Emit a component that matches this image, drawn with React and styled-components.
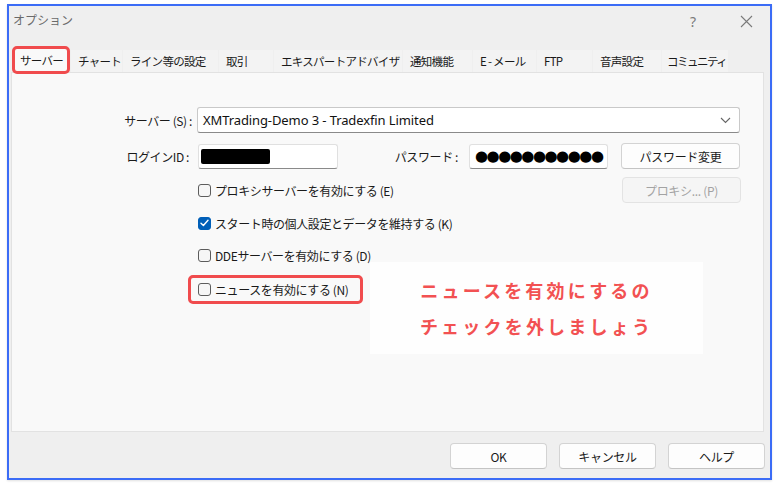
import React from "react";
import styled, { createGlobalStyle } from "styled-components";

const Global = createGlobalStyle`
  html, body { margin: 0; padding: 0; background: #ffffff; }
  body { font-family: "Noto Sans", "Noto Sans CJK JP", sans-serif; }
  * { box-sizing: border-box; }
`;

const Page = styled.div`
  width: 780px;
  height: 487px;
  padding: 4px 0 0 7px;
  background: #ffffff;
`;

const Frame = styled.div`
  width: 765px;
  height: 476px;
  border: 2px solid #3b6cf6;
  background: #efefef;
  display: flex;
  flex-direction: column;
  box-shadow: 0 1px 2px rgba(0, 0, 0, 0.12);
`;

const TitleBar = styled.div`
  height: 40px;
  display: flex;
  align-items: flex-start;
  padding: 6px 0 0 4px;
  font-family: "Noto Sans CJK JP", sans-serif;
  font-size: 12px;
  color: #6a6a6a;
`;

const TitleText = styled.div`
  flex: 1;
  line-height: 16px;
`;

const TitleButton = styled.div`
  width: 28px;
  height: 18px;
  display: flex;
  align-items: center;
  justify-content: center;
  color: #7a7a7a;
  font-family: "Noto Sans", sans-serif;
  font-size: 14px;
  margin-right: ${(p) => p.$mr || 0}px;
`;

const TabRow = styled.div`
  height: 26px;
  display: flex;
  align-items: flex-end;
  padding-left: 3px;
  position: relative;
  z-index: 2;
`;

const Tab = styled.div`
  width: ${(p) => p.$w}px;
  height: ${(p) => (p.$active ? 28 : 22)}px;
  margin-bottom: ${(p) => (p.$active ? -2 : 0)}px;
  margin-right: 1px;
  padding-left: ${(p) => (p.$active ? 5 : p.$pl || 7)}px;
  display: flex;
  align-items: center;
  background: ${(p) => (p.$active ? "#f9f9f9" : "#f3f3f3")};
  border: ${(p) => (p.$active ? "3px solid #f04b4d" : "none")};
  border-radius: ${(p) => (p.$active ? 5 : 0)}px;
  font-family: "Noto Sans CJK JP", sans-serif;
  font-size: 11.5px;
  letter-spacing: ${(p) => p.$ls || -0.7}px;
  color: #1a1a1a;
  white-space: nowrap;
  overflow: hidden;
`;

const Panel = styled.div`
  position: relative;
  margin: 0 6px 0 2px;
  height: 360px;
  border: 1px solid #e2e2e2;
  background: #f9f9f9;
  padding-top: 34px;
  display: flex;
  flex-direction: column;
  font-family: "Noto Sans CJK JP", sans-serif;
  font-size: 12px;
  letter-spacing: -0.4px;
  color: #1a1a1a;
`;

const Row = styled.div`
  display: flex;
  align-items: center;
  height: ${(p) => p.$h || 26}px;
  margin-top: ${(p) => p.$mt || 0}px;
`;

const Label = styled.div`
  width: ${(p) => p.$w}px;
  margin-right: ${(p) => p.$mr || 0}px;
  text-align: right;
  white-space: nowrap;
`;

const Select = styled.div`
  width: 543px;
  height: 26px;
  background: #ffffff;
  border: 1px solid #c9c9c9;
  border-bottom-color: #8a8a8a;
  border-radius: 3px;
  display: flex;
  align-items: center;
  padding: 0 8px 0 5px;
  font-family: "Noto Sans", "Noto Sans CJK JP", sans-serif;
  font-size: 13px;
  letter-spacing: -0.1px;
  color: #111;
`;

const SelectText = styled.div`
  flex: 1;
`;

const Input = styled.div`
  width: ${(p) => p.$w}px;
  height: 25px;
  margin-left: ${(p) => p.$ml || 0}px;
  background: #ffffff;
  border: 1px solid #e0e0e0;
  border-bottom-color: #8a8a8a;
  border-radius: 3px;
  display: flex;
  align-items: center;
  padding-left: 2px;
  overflow: hidden;
`;

const Redacted = styled.div`
  width: 69px;
  height: 15px;
  background: #000;
  border-radius: 2px;
`;

const Dots = styled.div`
  font-family: "DejaVu Sans", sans-serif;
  font-size: 15px;
  letter-spacing: -1.5px;
  white-space: nowrap;
  color: #000;
  padding-left: 3px;
`;

const Button = styled.div`
  width: ${(p) => p.$w || 119}px;
  height: 26px;
  margin-left: ${(p) => p.$ml || 0}px;
  margin-right: ${(p) => p.$mr || 0}px;
  background: ${(p) => (p.$disabled ? "#f5f5f5" : "#fdfdfd")};
  border: 1px solid ${(p) => (p.$disabled ? "#e3e3e3" : "#d3d3d3")};
  border-bottom-color: ${(p) => (p.$disabled ? "#e3e3e3" : "#c4c4c4")};
  border-radius: 4px;
  display: flex;
  align-items: center;
  justify-content: center;
  font-family: "Noto Sans CJK JP", sans-serif;
  font-size: 12px;
  letter-spacing: -0.3px;
  color: ${(p) => (p.$disabled ? "#a3a3a3" : "#1a1a1a")};
`;

const CheckRow = styled.div`
  display: flex;
  align-items: center;
  height: ${(p) => p.$h || 20}px;
  margin-top: ${(p) => p.$mt || 0}px;
  margin-left: ${(p) => p.$ml || 186}px;
`;

const Highlight = styled.div`
  display: flex;
  align-items: center;
  width: 175px;
  height: 29px;
  margin-left: 176px;
  margin-top: 10px;
  padding-left: 7px;
  border: 3px solid #f04b4d;
  border-radius: 5px;
`;

const Box = styled.div`
  width: 13px;
  height: 13px;
  border-radius: 3px;
  border: 1px solid ${(p) => (p.$checked ? "#005fb8" : "#5c5c5c")};
  background: ${(p) => (p.$checked ? "#005fb8" : "#f6f6f6")};
  display: flex;
  align-items: center;
  justify-content: center;
  margin-right: 4px;
  flex-shrink: 0;
`;

const CheckText = styled.span`
  white-space: nowrap;
`;

const Spacer = styled.div`
  flex: 1;
`;

const Callout = styled.div`
  position: absolute;
  left: 358px;
  top: 189px;
  width: 333px;
  height: 92px;
  background: #fefefe;
  display: flex;
  flex-direction: column;
  align-items: center;
  justify-content: center;
  font-family: "Noto Sans CJK JP", sans-serif;
  font-weight: 700;
  font-size: 18px;
  letter-spacing: 3.2px;
  line-height: 36px;
  color: #f25152;
`;

const Footer = styled.div`
  display: flex;
  justify-content: flex-end;
  gap: 12px;
  padding: 11px 5px 0 0;
`;

function Check({ checked, children }) {
  return (
    <>
      <Box $checked={checked}>
        {checked && (
          <svg width="9" height="8" viewBox="0 0 9 8">
            <path d="M1 4.2 L3.4 6.5 L8 1.3" fill="none" stroke="#fff" strokeWidth="1.4" strokeLinecap="round" strokeLinejoin="round" />
          </svg>
        )}
      </Box>
      <CheckText>{children}</CheckText>
    </>
  );
}

const tabs = [
  { t: "サーバー", w: 58, active: true },
  { t: "チャート", w: 51 },
  { t: "ライン等の設定", w: 95 },
  { t: "取引", w: 54 },
  { t: "エキスパートアドバイザ", w: 128 },
  { t: "通知機能", w: 69 },
  { t: "E - メール", w: 63 },
  { t: "FTP", w: 55 },
  { t: "音声設定", w: 68 },
  { t: "コミュニティ", w: 66, pl: 5, ls: -1.5 },
];

export default function App() {
  return (
    <>
      <Global />
      <Page>
        <Frame>
          <TitleBar>
            <TitleText>オプション</TitleText>
            <TitleButton $mr={25}>?</TitleButton>
            <TitleButton $mr={10}>
              <svg width="13" height="13" viewBox="0 0 13 13">
                <path d="M1 1 L12 12 M12 1 L1 12" stroke="#7a7a7a" strokeWidth="1.1" />
              </svg>
            </TitleButton>
          </TitleBar>
          <TabRow>
            {tabs.map((tab) => (
              <Tab key={tab.t} $w={tab.w} $active={tab.active} $pl={tab.pl} $ls={tab.ls}>
                {tab.t}
              </Tab>
            ))}
          </TabRow>
          <Panel>
            <Row>
              <Label $w={180} $mr={5}>サーバー (S) :</Label>
              <Select>
                <SelectText>XMTrading-Demo 3 - Tradexfin Limited</SelectText>
                <svg width="11" height="7" viewBox="0 0 11 7">
                  <path d="M1 1 L5.5 5.5 L10 1" fill="none" stroke="#666" strokeWidth="1.1" />
                </svg>
              </Select>
            </Row>
            <Row $mt={10} $h={26}>
              <Label $w={177} $mr={9}>ログインID :</Label>
              <Input $w={140}>
                <Redacted />
              </Input>
              <Label $w={120} $mr={11}>パスワード :</Label>
              <Input $w={139}>
                <Dots>●●●●●●●●●●●</Dots>
              </Input>
              <Button $ml={13}>パスワード変更</Button>
            </Row>
            <Row $mt={8}>
              <CheckRow $h={26}>
                <Check>プロキシサーバーを有効にする (E)</Check>
              </CheckRow>
              <Spacer />
              <Button $disabled $mr={22}>プロキシ... (P)</Button>
            </Row>
            <CheckRow $mt={10} $h={20}>
              <Check checked>スタート時の個人設定とデータを維持する (K)</Check>
            </CheckRow>
            <CheckRow $mt={12} $h={20}>
              <Check>DDEサーバーを有効にする (D)</Check>
            </CheckRow>
            <Highlight>
              <Check>ニュースを有効にする (N)</Check>
            </Highlight>
            <Callout>
              <div>ニュースを有効にするの</div>
              <div>チェックを外しましょう</div>
            </Callout>
          </Panel>
          <Footer>
            <Button $w={97}>OK</Button>
            <Button $w={97}>キャンセル</Button>
            <Button $w={97}>ヘルプ</Button>
          </Footer>
        </Frame>
      </Page>
    </>
  );
}
